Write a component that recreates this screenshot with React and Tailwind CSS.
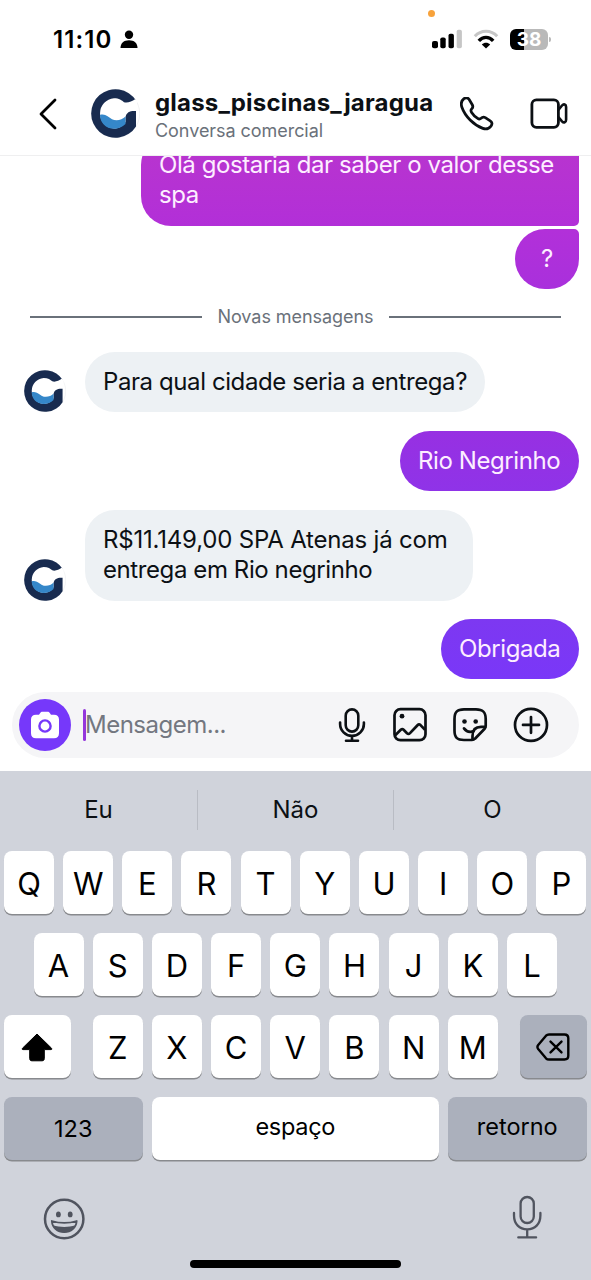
const topRow = ['Q', 'W', 'E', 'R', 'T', 'Y', 'U', 'I', 'O', 'P'];
const middleRow = ['A', 'S', 'D', 'F', 'G', 'H', 'J', 'K', 'L'];
const bottomRow = ['Z', 'X', 'C', 'V', 'B', 'N', 'M'];

function Avatar({ className }) {
  return (
    <svg viewBox="0 0 49 49" className={className}>
      <circle cx="24.5" cy="24.5" r="24.2" fill="#fff" stroke="#e8eaec" strokeWidth="0.6" />
      <path d="M45 11.5 A24.3 24.3 0 1 0 45 37.5Z" fill="#182b4f" />
      <path
        d="M23 9.2 C28 9.2 31 11.3 33 13.2 C36 14.4 41 12.7 44 10.3 L46 11.5 V22 H41.5 C37 22.5 35 25 34.5 28.5 V33 C31 38 27 39.5 23 39.5 A15.2 15.2 0 0 1 23 9.2Z"
        fill="#fff"
      />
      <path
        d="M9 26 C14 24.2 17.5 28 21 30.2 C25 32.2 31 31.2 34.5 27.5 V35 C31.5 38.2 27 39.7 23 39.7 C15 39.7 9 34 9 26Z"
        fill="#3587c9"
      />
    </svg>
  );
}

function StatusBar() {
  return (
    <div className="relative flex h-[72px] shrink-0 items-start pl-[53px] pr-[40px] pt-[25px]">
      <span className="absolute left-[428px] top-[10px] size-[7px] rounded-full bg-[#f7a23b]" />
      <span className="w-[60px] whitespace-nowrap text-[24px] font-semibold leading-[30px] tracking-[1.1px]">11:10</span>
      <svg viewBox="0 0 18 18" className="ml-[7px] mt-[5px] size-[18px]">
        <circle cx="9" cy="4.7" r="4.2" />
        <path d="M0.5 18 C0.5 13 4 10.3 9 10.3 S17.5 13 17.5 18Z" />
      </svg>
      <div className="ml-auto flex items-start">
        <svg viewBox="0 0 30 20" className="mt-[4px] h-[20px] w-[30px]">
          <rect x="0" y="12" width="6" height="7.3" rx="2" />
          <rect x="8.3" y="8.5" width="5.4" height="10.8" rx="1.8" />
          <rect x="16.5" y="4.7" width="5.4" height="14.6" rx="1.8" />
          <rect x="24.7" y="0.8" width="5.2" height="18.5" rx="1.8" fill="#c6c6c6" />
        </svg>
        <svg viewBox="0 0 26 20" fill="none" className="ml-[11px] mt-[4px] h-[20px] w-[26px]">
          <path d="M1.8 7.2 C8 0.5 18 0.5 24.2 7.2" stroke="#c6c6c6" strokeWidth="3" />
          <path d="M5.8 11.8 C10 7.2 16 7.2 20.2 11.8" stroke="#000" strokeWidth="3.4" />
          <path d="M13 19.4 L8.8 15.4 C11.2 13.2 14.8 13.2 17.2 15.4Z" fill="#000" />
        </svg>
        <div className="ml-[11px] mt-[4px] flex h-[21px] w-[38px] items-center justify-center overflow-hidden rounded-[6px] bg-[linear-gradient(to_right,#000_38%,#b9b9b9_38%)]">
          <span className="text-[19px] font-bold leading-none text-white">38</span>
        </div>
        <span className="ml-px mt-[12px] h-[5px] w-[2px] rounded-r-full bg-[#b9b9b9]" />
      </div>
    </div>
  );
}

function Header() {
  return (
    <header className="flex h-[84px] shrink-0 items-start border-b border-[#efeff0] pl-[38px] pr-[23px]">
      <svg viewBox="0 0 19 32" fill="none" className="mt-[26px] h-[32px] w-[19px]">
        <path d="M17 2 L3 16 L17 30" stroke="#000" strokeWidth="2.8" strokeLinecap="round" strokeLinejoin="round" />
      </svg>
      <Avatar className="ml-[34px] mt-[17px] size-[49px]" />
      <div className="ml-[15px] mt-[16px] w-[290px]">
        <p className="whitespace-nowrap text-[24px] font-bold leading-[29px] tracking-[0.18px] text-[#0c1014]">
          glass_piscinas_jaragua
        </p>
        <p className="text-[18px] leading-[28px] tracking-[-0.05px] text-[#6a717a]">Conversa comercial</p>
      </div>
      <svg viewBox="0 0 36 36" fill="none" className="ml-auto mt-[25px] size-[34px]">
        <path
          d="M4.2 1.7 C6.5 0.3 8.2 0.5 9.7 2.7 L13 8.2 C14 10.1 13.7 11.5 12.3 12.7 C11.3 13.7 11.4 14.9 12.3 16.3 C13.9 18.8 16.1 21 18.7 22.6 C20 23.5 21.3 23.4 22.3 22.5 C23.6 21.2 25.1 20.9 26.8 21.9 L32 25.2 C34.2 26.7 34.4 28.7 32.8 30.8 C30.7 33.4 27.6 34.5 24.2 33.2 C14.5 29.6 5.4 20.5 2 10.8 C0.8 7.3 1.5 3.8 4.2 1.7Z"
          stroke="#0c1014"
          strokeWidth="2.9"
          strokeLinejoin="round"
        />
      </svg>
      <svg viewBox="0 0 38 32" fill="none" className="ml-[36.5px] mt-[26px] h-[32px] w-[38px]">
        <rect x="1.9" y="1.8" width="26.5" height="27.5" rx="4.5" stroke="#0c1014" strokeWidth="2.8" />
        <path
          d="M28.4 12 L32 7.5 C33.7 5.6 36.1 6.3 36.1 9 V21.7 C36.1 24.5 33.8 25.2 32 23.3 L28.4 19"
          stroke="#0c1014"
          strokeWidth="2.6"
          strokeLinejoin="round"
        />
      </svg>
    </header>
  );
}

function Received({ className, bubble, children }) {
  return (
    <div className={`flex items-end pl-[24px] ${className}`}>
      <Avatar className="size-[42px]" />
      <div className={`ml-[19px] whitespace-nowrap rounded-[30px] bg-[#edf1f4] px-[18px] py-[15px] text-[#0c1014] ${bubble}`}>
        {children}
      </div>
    </div>
  );
}

function Sent({ className, children }) {
  return (
    <div className={`self-end whitespace-nowrap px-[18px] py-[15px] text-[#fdeeff] ${className}`}>{children}</div>
  );
}

function Composer() {
  return (
    <div className="ml-[12px] mr-[12px] flex h-[66px] shrink-0 items-center rounded-full bg-[#f5f5f7] pl-[7px] pr-[30.5px]">
      <div className="flex size-[52px] items-center justify-center rounded-full bg-[#7638fa]">
        <svg viewBox="0 0 28 28" className="size-[28px]">
          <path
            d="M8 3.7 L9.2 1.9 C9.8 1 10.4 0.7 11.5 0.7 H16.5 C17.6 0.7 18.2 1 18.8 1.9 L20 3.7 H23 C26.2 3.7 28 5.4 28 8.6 V22.3 C28 25.5 26.2 27.3 23 27.3 H5 C1.8 27.3 0 25.5 0 22.3 V8.6 C0 5.4 1.8 3.7 5 3.7Z"
            fill="#fff"
          />
          <circle cx="14" cy="15" r="5.6" fill="none" stroke="#7638fa" strokeWidth="2.4" />
        </svg>
      </div>
      <span className="ml-[12px] h-[32px] w-[3px] rounded-full bg-[#9437dc]" />
      <span className="-ml-px text-[24px] leading-[30px] tracking-[-0.5px] text-[#737780]">Mensagem...</span>
      <div className="ml-auto flex items-center text-[#0c1014]">
        <svg viewBox="0 0 28 36" fill="none" stroke="currentColor" strokeLinecap="round" className="h-[36px] w-[28px]">
          <rect x="7.7" y="2.4" width="12.6" height="22.2" rx="6.3" strokeWidth="2.6" />
          <path d="M2.1 15.5 V17 A11.9 11.9 0 0 0 25.9 17 V15.5 M14 29 V33.5 M8 33.7 H20" strokeWidth="2.6" />
        </svg>
        <svg
          viewBox="0 0 36 36"
          fill="none"
          stroke="currentColor"
          strokeWidth="2.7"
          strokeLinejoin="round"
          className="ml-[26px] size-[36px]"
        >
          <rect x="2.5" y="2.2" width="31" height="31" rx="6" />
          <path d="M3 28.5 L8.8 22.8 C9.8 21.9 10.7 21.9 11.6 22.8 L15 26.2 C16 27.1 17 27.1 18 26.1 L25.5 18.2 C26.6 17.1 27.5 17.2 28.5 18.1 L33 22.7" />
          <circle cx="10" cy="9.2" r="2.4" fill="currentColor" stroke="none" />
        </svg>
        <svg
          viewBox="0 0 36 36"
          fill="none"
          stroke="currentColor"
          strokeWidth="2.7"
          strokeLinecap="round"
          strokeLinejoin="round"
          className="ml-[24px] size-[36px]"
        >
          <path d="M20 33 H12 C5 33 2.5 30.5 2.5 23.5 V12 C2.5 5 5 2.4 12 2.4 H24 C31 2.4 33.7 5 33.7 12 V18.7 C33.7 20 33.3 21 32.4 22 L23 31.7 C22.2 32.6 21.2 33 20 33Z" />
          <path d="M20.5 32.5 V29 C20.5 23 23.5 19.9 29 19.9 H33.2" />
          <path d="M12 21.4 C14 24.2 17.5 25.5 21.5 24.2" />
          <circle cx="12.5" cy="14.5" r="2.3" fill="currentColor" stroke="none" />
          <circle cx="23.7" cy="14.5" r="2.3" fill="currentColor" stroke="none" />
        </svg>
        <svg
          viewBox="0 0 36 36"
          fill="none"
          stroke="currentColor"
          strokeWidth="2.7"
          strokeLinecap="round"
          className="ml-[25px] size-[36px]"
        >
          <circle cx="18" cy="17.9" r="16" />
          <path d="M18 10 V25.8 M10 17.9 H26" />
        </svg>
      </div>
    </div>
  );
}

function Key({ className = 'w-[50px] bg-white pt-[2px] text-[31px]', children }) {
  return (
    <div
      className={`flex h-[63px] shrink-0 items-center justify-center rounded-[8px] leading-none text-black shadow-[0_1.5px_0_#888a8e] ${className}`}
    >
      {children}
    </div>
  );
}

function Keyboard() {
  return (
    <div className="flex h-[509px] shrink-0 flex-col bg-[#d0d3db]">
      <div className="grid h-[80px] shrink-0 grid-cols-3 items-center pb-[2px] text-center text-[24px] text-[#0c1014]">
        <span>Eu</span>
        <span className="border-x border-[#b9bcc4] py-[1px] leading-[38px]">Não</span>
        <span>O</span>
      </div>
      <div className="flex flex-col gap-[19px] pl-[4px] pr-[4.5px]">
        <div className="flex justify-between">
          {topRow.map((letter) => (
            <Key key={letter}>{letter}</Key>
          ))}
        </div>
        <div className="flex justify-between px-[29.5px]">
          {middleRow.map((letter) => (
            <Key key={letter}>{letter}</Key>
          ))}
        </div>
        <div className="flex justify-between">
          <Key className="w-[66.5px] bg-white">
            <svg viewBox="0 0 34 30" className="h-[30px] w-[34px]">
              <path
                d="M17 2 L31.5 16.2 C32 17 32 17.6 31 17.6 H24.3 V26.5 C24.3 28 23.5 28.8 22 28.8 H12 C10.5 28.8 9.7 28 9.7 26.5 V17.6 H3 C2 17.6 2 17 2.5 16.2Z"
                stroke="#000"
                strokeLinejoin="round"
              />
            </svg>
          </Key>
          <div className="flex gap-[9.2px]">
            {bottomRow.map((letter) => (
              <Key key={letter}>{letter}</Key>
            ))}
          </div>
          <Key className="w-[66.5px] bg-[#abb0bc]">
            <svg
              viewBox="0 0 34 30"
              fill="none"
              stroke="#000"
              strokeWidth="2.4"
              strokeLinecap="round"
              strokeLinejoin="round"
              className="h-[30px] w-[34px]"
            >
              <path d="M13 2.5 H28.5 C31 2.5 32.3 3.8 32.3 6.2 V23.8 C32.3 26.2 31 27.5 28.5 27.5 H13 C11.7 27.5 10.8 27.1 10 26.3 L2.2 17 C1.2 15.7 1.2 14.3 2.2 13 L10 3.7 C10.8 2.9 11.7 2.5 13 2.5Z" />
              <path d="M14.5 9.6 L25.5 20.4 M25.5 9.6 L14.5 20.4" />
            </svg>
          </Key>
        </div>
        <div className="flex justify-between">
          <Key className="w-[138.5px] bg-[#abb0bc] text-[23.5px]">123</Key>
          <Key className="w-[287.5px] bg-white pb-[3px] text-[23.5px] tracking-[-0.3px]">espaço</Key>
          <Key className="w-[138.5px] bg-[#abb0bc] pb-[3px] text-[23.5px]">retorno</Key>
        </div>
      </div>
      <div className="flex items-start justify-between pl-[43px] pr-[49.5px] pt-[35px] text-[#50545f]">
        <svg viewBox="0 0 42 42" fill="none" className="mt-[3px] size-[42px]">
          <circle cx="21.2" cy="21" r="19.2" stroke="currentColor" strokeWidth="2.5" />
          <ellipse cx="15.4" cy="16.4" rx="2.4" ry="2.9" fill="currentColor" />
          <ellipse cx="27.2" cy="16.4" rx="2.4" ry="2.9" fill="currentColor" />
          <path
            d="M8.8 23 C16.5 25.4 26 25.4 33.7 23 C33.2 29.8 28 34.2 21.2 34.2 S9.3 29.8 8.8 23Z"
            stroke="currentColor"
            strokeWidth="1.8"
            strokeLinejoin="round"
          />
          <path d="M10 27.2 C17 29.5 25.5 29.5 32.4 27.2 C30.5 31.8 26.5 34.2 21.2 34.2 S12 31.8 10 27.2Z" fill="currentColor" />
        </svg>
        <svg viewBox="0 0 30 44" fill="none" stroke="currentColor" strokeWidth="2.3" strokeLinecap="round" className="h-[44px] w-[30px]">
          <rect x="8.6" y="2" width="13.2" height="26" rx="6.6" />
          <path d="M2 18 V20.5 C2 29 7.5 34.4 15.2 34.4 S28.4 29 28.4 20.5 V18 M15.2 34.5 V42 M6.3 42.4 H24.1" />
        </svg>
      </div>
      <div className="mx-auto mb-[12px] mt-auto h-[8px] w-[211px] shrink-0 rounded-full bg-black" />
    </div>
  );
}

function App() {
  return (
    <div className="flex h-[1280px] w-[591px] flex-col overflow-hidden bg-white font-['Inter','Liberation_Sans',sans-serif] text-black">
      <StatusBar />
      <Header />
      <main className="flex h-[536px] shrink-0 flex-col overflow-hidden pr-[12px] text-[24px] leading-[30.3px] tracking-[-0.41px]">
        <Sent className="-mt-[21px] w-[438px] shrink-0 rounded-[30px] rounded-r-[5px] bg-linear-to-b from-[#b935cd] to-[#b22fd8]">
          Olá gostaria dar saber o valor desse
          <br />
          spa
        </Sent>
        <Sent className="mt-[3.5px] w-[64px] rounded-[30px] rounded-tr-[5px] bg-linear-to-b from-[#b230d9] to-[#a930dc] text-center">
          ?
        </Sent>
        <div className="ml-[30px] mr-[18px] mt-[15.5px] flex h-[24px] items-center gap-[15px]">
          <span className="h-[1.5px] flex-1 bg-[#6a717a]" />
          <span className="whitespace-nowrap text-[18px] tracking-[-0.05px] text-[#6a717a]">Novas mensagens</span>
          <span className="h-[1.5px] flex-1 bg-[#6a717a]" />
        </div>
        <Received className="mt-[23px]" bubble="w-[400px]">
          Para qual cidade seria a entrega?
        </Received>
        <Sent className="mt-[19px] w-[179px] rounded-[30px] bg-linear-to-b from-[#9730e2] to-[#8f33e8]">Rio Negrinho</Sent>
        <Received className="mt-[18.5px]" bubble="w-[388px]">
          <span className="tracking-[-0.2px]">R$11.149,00 SPA Atenas já com</span>
          <br />
          entrega em Rio negrinho
        </Received>
        <Sent className="mt-[18px] w-[138px] rounded-[30px] bg-linear-to-b from-[#7d38f1] to-[#7a37f8]">Obrigada</Sent>
      </main>
      <Composer />
      <div className="h-[13px] shrink-0" />
      <Keyboard />
    </div>
  );
}

export default App;
